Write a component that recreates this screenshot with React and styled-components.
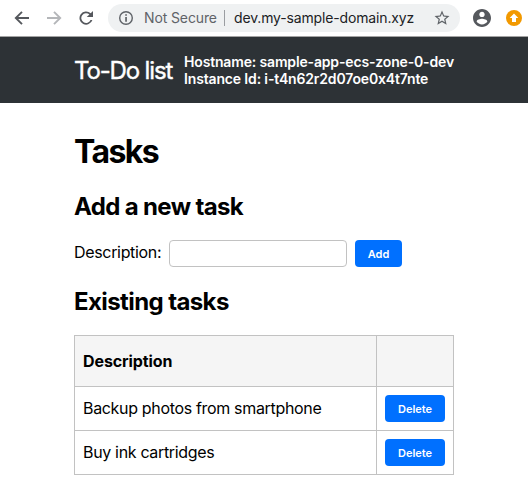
import React from 'react';
import styled, { createGlobalStyle } from 'styled-components';

const Global = createGlobalStyle`
  * { box-sizing: border-box; }
  body {
    margin: 0;
    background: #fff;
    color: #000;
    font-family: Inter, "Liberation Sans", sans-serif;
    overflow: hidden;
  }
`;

const Page = styled.div`
  width: 528px;
  height: 483px;
  overflow: hidden;
`;

const Toolbar = styled.div`
  display: flex;
  align-items: center;
  height: 37px;
  padding-left: 12px;
  border-bottom: 1px solid #a3a3a3;
  svg { display: block; flex: none; }
`;

const NavButton = styled.span`
  width: 20px;
  height: 20px;
  margin-right: 12px;
  color: ${(p) => (p.$muted ? '#b4b6b9' : '#55585d')};
`;

const AddressBar = styled.div`
  display: flex;
  align-items: center;
  width: 352px;
  height: 28px;
  padding: 0 9px 0 10px;
  border-radius: 14px;
  background: #eff1f2;
  color: #5f6368;
  font-size: 14px;
`;

const Security = styled.span`
  width: 73px;
  height: 18px;
  line-height: 18px;
  margin-left: 10px;
  white-space: nowrap;
  letter-spacing: -0.12px;
`;

const Separator = styled.span`
  width: 1px;
  height: 16px;
  margin: 0 9px 0 7px;
  background: #9a9da1;
`;

const Address = styled.span`
  flex: 1;
  height: 18px;
  line-height: 18px;
  color: #202124;
  white-space: nowrap;
  letter-spacing: -0.15px;
`;

const Profile = styled.span`
  margin: 0 15px 0 13px;
`;

const Header = styled.header`
  display: flex;
  align-items: center;
  height: 66px;
  padding-left: 74px;
  background: #2d3236;
  color: #fff;
  white-space: nowrap;
`;

const Brand = styled.div`
  width: 110px;
  padding-top: 2px;
  font-size: 24px;
  line-height: 28px;
  letter-spacing: -1.15px;
  -webkit-text-stroke: 0.4px #fff;
`;

const Instance = styled.div`
  font-size: 14px;
  font-weight: 600;
  line-height: 17px;
  letter-spacing: ${(p) => p.$tracking};
`;

const Main = styled.main`
  width: 380px;
  margin-left: 74px;
  white-space: nowrap;
`;

const Title = styled.h1`
  margin: 29px 0 0;
  font-size: 32px;
  font-weight: 700;
  line-height: 40px;
  letter-spacing: -1.6px;
`;

const Heading = styled.h2`
  margin: ${(p) => p.$top} 0 0;
  font-size: 24px;
  font-weight: 700;
  line-height: 30px;
  letter-spacing: ${(p) => p.$tracking};
`;

const Form = styled.form`
  display: flex;
  height: 27px;
  margin-top: 18px;
`;

const Label = styled.label`
  width: 95px;
  font-size: 16px;
  line-height: 25px;
  letter-spacing: -0.33px;
`;

const Input = styled.input`
  width: 178px;
  height: 27px;
  margin: 0 8px 0 0;
  border: 1px solid #c2c2c2;
  border-radius: 4px;
  background: #fff;
`;

const Button = styled.button`
  display: block;
  width: ${(p) => p.$width};
  height: 27px;
  padding: 1px 0 0;
  border: 0;
  border-radius: 4px;
  background: #0070ff;
  color: #fff;
  font: 600 11px/26px Inter, "Liberation Sans", sans-serif;
`;

const Table = styled.table`
  width: 380px;
  margin-top: 18px;
  border-collapse: collapse;
  table-layout: fixed;
  font-size: 16px;
  line-height: 20px;
`;

const Row = styled.tr`
  height: ${(p) => (p.$head ? '51px' : '44px')};
  background: ${(p) => (p.$head ? '#f5f5f5' : '#fff')};
`;

const Cell = styled.td`
  width: ${(p) => (p.$action ? '77px' : '302px')};
  padding: ${(p) => (p.$raised ? '0 8px 2px' : '0 8px')};
  border: 1px solid #c2c2c2;
  text-align: left;
  vertical-align: middle;
  letter-spacing: ${(p) => p.$tracking || '0'};
`;

const Arrow = ({ flip }) => (
  <svg width="20" height="20" viewBox="0 0 20 20" fill="none" stroke="currentColor" strokeWidth="1.9">
    {flip ? <path d="M3 10h13M10 3.8l6.2 6.2-6.2 6.2" /> : <path d="M17 10H4M10 3.8L3.8 10l6.2 6.2" />}
  </svg>
);

const Reload = () => (
  <svg width="20" height="20" viewBox="0 0 20 20">
    <path d="M14.7 5.3A6.6 6.6 0 1 0 16.4 12h-1.9A4.8 4.8 0 1 1 13.4 6.6L10.7 9.1H17V3z" fill="currentColor" />
  </svg>
);

const Info = () => (
  <svg width="16" height="16" viewBox="0 0 16 16">
    <circle cx="8" cy="8" r="6.3" fill="none" stroke="#5f6368" strokeWidth="1.4" />
    <path d="M7.2 4.2h1.7v1.6H7.2zM7.2 7.1h1.7v4.6H7.2z" fill="#5f6368" />
  </svg>
);

const Star = () => (
  <svg width="18" height="18" viewBox="0 0 24 24">
    <path
      d="M22 9.24l-7.19-.62L12 2 9.19 8.63 2 9.24l5.46 4.73L5.82 21 12 17.27 18.18 21l-1.63-7.03L22 9.24zM12 15.4l-3.76 2.27 1-4.28-3.32-2.88 4.38-.38L12 6.1l1.71 4.04 4.38.38-3.32 2.88 1 4.28L12 15.4z"
      fill="#5f6368"
    />
  </svg>
);

const Person = () => (
  <svg width="18" height="18" viewBox="2 2 20 20">
    <path
      d="M12 2C6.48 2 2 6.48 2 12s4.48 10 10 10 10-4.48 10-10S17.52 2 12 2zm0 3c1.66 0 3 1.34 3 3s-1.34 3-3 3-3-1.34-3-3 1.34-3 3-3zm0 14.2c-2.5 0-4.71-1.28-6-3.22.03-1.99 4-3.08 6-3.08 1.99 0 5.97 1.09 6 3.08-1.29 1.94-3.5 3.22-6 3.22z"
      fill="#55585d"
    />
  </svg>
);

const Update = () => (
  <svg width="16" height="16" viewBox="0 0 16 16">
    <circle cx="8" cy="8" r="8" fill="#f29900" />
    <path d="M8 3.6l4.3 4.5H10V12H6V8.1H3.7z" fill="#fff" />
  </svg>
);

const tasks = ['Backup photos from smartphone', 'Buy ink cartridges'];

export default function App() {
  return (
    <Page>
      <Global />
      <Toolbar>
        <NavButton><Arrow /></NavButton>
        <NavButton $muted><Arrow flip /></NavButton>
        <NavButton><Reload /></NavButton>
        <AddressBar>
          <Info />
          <Security>Not Secure</Security>
          <Separator />
          <Address>dev.my-sample-domain.xyz</Address>
          <Star />
        </AddressBar>
        <Profile><Person /></Profile>
        <Update />
      </Toolbar>
      <Header>
        <Brand>To-Do list</Brand>
        <div>
          <Instance $tracking="-0.16px">Hostname: sample-app-ecs-zone-0-dev</Instance>
          <Instance $tracking="-0.15px">Instance Id: i-t4n62r2d07oe0x4t7nte</Instance>
        </div>
      </Header>
      <Main>
        <Title>Tasks</Title>
        <Heading $top="20px" $tracking="-0.65px">Add a new task</Heading>
        <Form onSubmit={(e) => e.preventDefault()}>
          <Label htmlFor="description">Description:</Label>
          <Input id="description" />
          <Button $width="47px">Add</Button>
        </Form>
        <Heading $top="20px" $tracking="-0.6px">Existing tasks</Heading>
        <Table>
          <thead>
            <Row $head>
              <Cell as="th" $tracking="-0.1px">Description</Cell>
              <Cell as="th" $action />
            </Row>
          </thead>
          <tbody>
            {tasks.map((task) => (
              <Row key={task}>
                <Cell $raised $tracking="-0.33px">{task}</Cell>
                <Cell $action><Button $width="60px">Delete</Button></Cell>
              </Row>
            ))}
          </tbody>
        </Table>
      </Main>
    </Page>
  );
}
